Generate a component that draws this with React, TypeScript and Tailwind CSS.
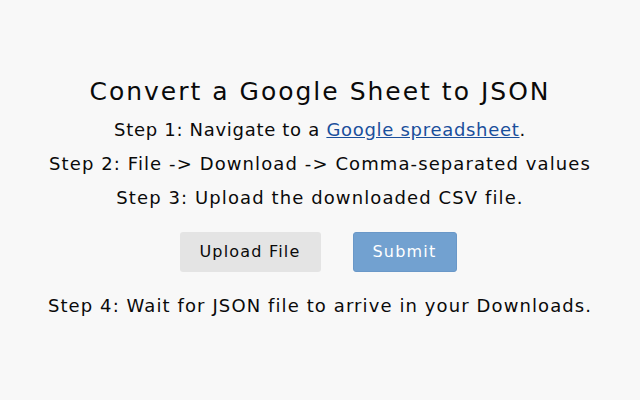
export default function App() {
  return (
    <div className="w-[640px] h-[400px] bg-[#f8f8f8] flex flex-col items-center text-[#0a0a0a] pt-[75px]" style={{ fontFamily: '"DejaVu Sans", sans-serif' }}>
      <h1 className="text-[25px] leading-[34px] tracking-[2px]">Convert a Google Sheet to JSON</h1>
      <p className="text-[18px] leading-[22px] mt-[10px] tracking-[0.7px]">
        Step 1: Navigate to a <a className="text-[#1a4f9c] underline" href="#">Google spreadsheet</a>.
      </p>
      <p className="text-[18px] leading-[22px] mt-[12px] tracking-[1.1px]">Step 2: File -&gt; Download -&gt; Comma-separated values</p>
      <p className="text-[18px] leading-[22px] mt-[12px] tracking-[1.1px]">Step 3: Upload the downloaded CSV file.</p>
      <div className="flex gap-[32px] mt-[23px] mr-[4px]">
        <button className="w-[141px] h-[40px] bg-[#e4e4e4] rounded-[3px] text-[16px] tracking-[1.2px]">Upload File</button>
        <button className="w-[104px] h-[40px] bg-[#72a1d0] rounded-[3px] text-[16px] tracking-[1.2px] text-white border border-[#6a98c8]">Submit</button>
      </div>
      <p className="text-[18px] leading-[22px] mt-[23px] tracking-[1.1px]">Step 4: Wait for JSON file to arrive in your Downloads.</p>
    </div>
  );
}
